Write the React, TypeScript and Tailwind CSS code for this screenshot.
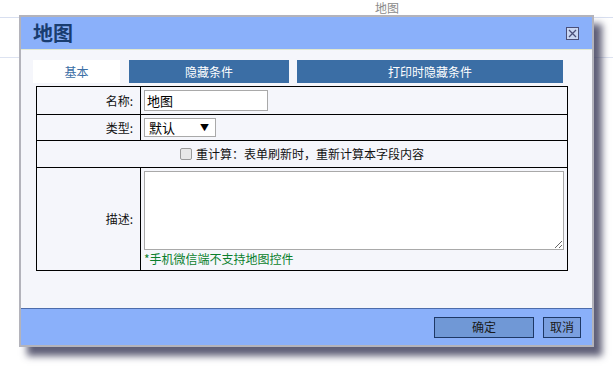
import React from "react";

const font = "font-['Noto_Sans_CJK_SC','Microsoft_YaHei',sans-serif]";

function CloseIcon() {
  return (
    <svg width="13" height="13" viewBox="0 0 13 13">
      <rect x="0.5" y="0.5" width="12" height="12" fill="#c9d6f2" stroke="#4a4f78" />
      <path d="M3 3 L10 10 M10 3 L3 10" stroke="#4a4f78" strokeWidth="1.3" />
    </svg>
  );
}

export default function App() {
  return (
    <div className={`relative w-[613px] h-[366px] bg-white overflow-hidden ${font}`}>
      {/* page behind the dialog */}
      <div className="h-[18px] border-b border-[#d8dff0] pl-[375px] pt-[1px] text-[12px] leading-[14px] text-[#8a8a8a]">
        地图
      </div>
      <div className="h-[40px] border-b border-[#dde3f1]" />

      {/* dialog */}
      <div className="absolute left-[19px] top-[15px] w-[575px] h-[332px] border-2 border-[#b3b3bb] bg-[#f5f6fb] flex flex-col shadow-[8px_9px_7px_rgba(55,55,85,0.8)]">
        <div className="h-[33px] shrink-0 bg-[#8ab0fa] border-b border-[#e2e8cf] flex items-center justify-between pl-[12px] pr-[13px]">
          <span className="text-[20px] font-bold text-[#193c70] leading-none">地图</span>
          <CloseIcon />
        </div>

        <div className="flex-1 pt-[10px] pl-[12px]">
          <div className="flex gap-[8px] h-[23px] text-[12px]">
            <div className="w-[87px] bg-white text-[#3b6ea5] flex items-center justify-center">基本</div>
            <div className="w-[160px] ml-[1px] bg-[#3b6ea5] text-white flex items-center justify-center">隐藏条件</div>
            <div className="w-[266px] bg-[#3b6ea5] text-white flex items-center justify-center">打印时隐藏条件</div>
          </div>

          <table className="mt-[3px] ml-[3px] w-[532px] border-collapse text-[12px] text-[#111]">
            <tbody>
              <tr className="h-[28px]">
                <td className="w-[104px] border border-black text-right pr-[7px]">名称:</td>
                <td className="border border-black px-[3px]">
                  <div className="w-[124px] h-[21px] border border-[#a9a9a9] bg-white text-[13px] leading-[19px] pl-[2px] text-black">地图</div>
                </td>
              </tr>
              <tr className="h-[26px]">
                <td className="border border-black text-right pr-[7px]">类型:</td>
                <td className="border border-black px-[3px]">
                  <div className="w-[72px] h-[19px] border border-[#a9a9a9] bg-white flex items-center justify-between pl-[4px] pr-[6px] text-[13px] text-black">
                    <span>默认</span>
                    <span className="text-[9px]">▼</span>
                  </div>
                </td>
              </tr>
              <tr className="h-[27px]">
                <td colSpan={2} className="border border-black">
                  <div className="flex items-center justify-center gap-[4px]">
                    <span className="w-[12px] h-[12px] rounded-[2px] border border-[#9a9a9a] bg-[#e8e8e8]" />
                    <span>重计算：表单刷新时，重新计算本字段内容</span>
                  </div>
                </td>
              </tr>
              <tr className="h-[103px]">
                <td className="border border-black text-right pr-[7px]">描述:</td>
                <td className="border border-black px-[3px] pt-[3px] pb-[4px] align-top">
                  <textarea className="block w-[420px] h-[79px] border border-[#a9a9a9] bg-white resize-y outline-none" />
                  <div className="text-[#0a7f2c] text-[12px] leading-[15px] mt-[1px]">*手机微信端不支持地图控件</div>
                </td>
              </tr>
            </tbody>
          </table>
        </div>

        <div className="h-[37px] shrink-0 bg-[#8ab0fa] border-t border-[#4d6cab] flex items-center justify-end gap-[9px] pr-[11px] text-[12px] text-[#1a1a1a]">
          <button className="w-[100px] h-[21px] border border-[#1e3866] bg-[#7098d6]">确定</button>
          <button className="w-[38px] h-[21px] border border-[#1e3866] bg-[#7a9fe0]">取消</button>
        </div>
      </div>
    </div>
  );
}
